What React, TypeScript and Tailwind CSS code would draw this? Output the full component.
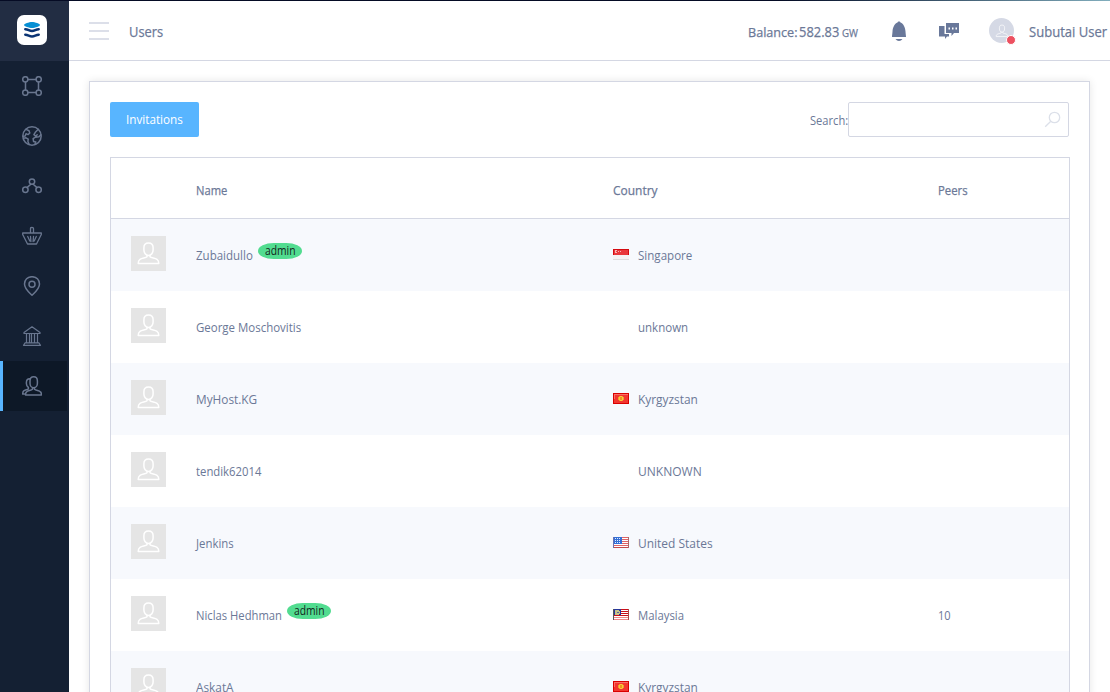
import React from "react";

const S = ({ children }: { children: React.ReactNode }) => (
  <svg width="20" height="20" viewBox="0 0 20 20" fill="none" stroke="currentColor" strokeWidth="1.5" strokeLinejoin="round" strokeLinecap="round">
    {children}
  </svg>
);

/* Slightly narrowed text, anchored at its left edge. */
const T = ({ children, scale = "scale-x-[0.885]" }: { children: React.ReactNode; scale?: string }) => (
  <span className={`inline-block origin-left whitespace-nowrap ${scale}`}>{children}</span>
);

const Person = ({ className = "" }: { className?: string }) => (
  <svg width="25" height="25" viewBox="0 0 25 25" fill="none" stroke="currentColor" strokeWidth="1.5" strokeLinejoin="round" className={className}>
    <path d="M12.500 1.900C9.300 1.900 7.900 3.600 7.900 6.700v2.200c0 2.800 1.800 5.600 4.600 5.600s4.600-2.800 4.600-5.600V6.700c0-3.100-1.400-4.800-4.600-4.800ZM11 14.300v1.500c-1.200 1.300-5 1.200-7 2.600-1.600 1.100-1.800 2-1.800 4h20.600c0-2-.2-2.900-1.800-4-2-1.400-5.800-1.300-7-2.600v-1.500" />
  </svg>
);

const navIcons = [
  <S key="blueprint">
    <circle cx="3.300" cy="3.300" r="2.600" /><circle cx="16.700" cy="3.300" r="2.600" />
    <circle cx="3.300" cy="16.700" r="2.600" /><circle cx="16.700" cy="16.700" r="2.600" />
    <path d="M6 3.500h8M6 16.500h8M3.500 6v8M16.500 6v8" />
  </S>,
  <S key="globe">
    <circle cx="10" cy="10" r="9.200" />
    <path d="M4 3.400 7 4.700l.8 2.200-1.600 1.700-2.200-.9-.8 2.300-2 .3M1.500 12.300l2.500-.5 2.200 1.400-.3 2.300 1.300 3M16.300 3.300l-3 3-1.400 2.400 1.800 1.400 1.500-1.400M18.900 8.800l-2 2-3.400.4-2.400 1.500.5 2.800 2.200.5-1 2.500" />
  </S>,
  <S key="peers">
    <circle cx="10" cy="5.600" r="2.700" /><circle cx="3.400" cy="13.700" r="2.700" /><circle cx="16.600" cy="13.700" r="2.700" />
    <path d="M8.800 8.200 5 11.600M11.200 8.200l3.800 3.400" />
  </S>,
  <S key="basket">
    <path d="M8.500 7V2.500C8.500 1 11.500 1 11.500 2.500V7M.7 7h18.600v1.500L14.500 18h-9L.7 8.500ZM5.700 10.500 7.800 15M8.500 10.500l.4 5M11.500 10.500l-.4 5M14.300 10.500 12.200 15" strokeWidth="1.300" />
  </S>,
  <S key="pin">
    <path d="M10 .7c4.500 0 7.500 3.200 7.500 7.400 0 5-5 8.700-7.500 11.200C7.500 16.800 2.500 13.100 2.500 8.100 2.500 3.900 5.500.7 10 .7Z" /><circle cx="10" cy="8.200" r="3" />
  </S>,
  <S key="bank">
    <path d="M10 .8 18 6.500v1H2v-1ZM4.500 8v8.500M7.500 8v8.500M9.500 8v8.500M12.500 8v8.500M15.500 8v8.500M3.200 16.800h13.600M1.500 19.300h17M3 17l-1.500 2.300M17 17l1.500 2.300" strokeWidth="1.200" />
  </S>,
  <S key="users">
    <path d="M11.700.8C9.200.8 8 2.400 8 5v2.200c0 2.300 1.400 4.600 3.700 4.600s3.700-2.300 3.700-4.600V5c0-2.600-1.200-4.200-3.700-4.200ZM10.500 11.800v1.400c-1.300 1.400-4.700 1.300-6 2.700-.8.800-1 1.600-1 3h16c0-1.400-.2-2.200-1-3-1.300-1.400-4.700-1.300-6-2.700v-1.400M8 2.800C5.500 2.700 4.400 3.900 4.400 6.400v1.200c0 1.800.8 3.200 2 3.900v1.300c-1.200 1-3.700 1-4.800 2.300-.7.800-.9 1.500-.9 3h1.600" />
  </S>,
];

const Flag = ({ kind }: { kind: string }) => (
  <svg width="16" height="11" viewBox="0 0 16 11" shapeRendering="crispEdges" className="mb-[3px] shrink-0">
    {kind === "sg" && <>
      <rect width="16" height="6" fill="#e9383b" /><rect y="6" width="16" height="5" fill="#f5f3f3" />
      <path d="M0 .5h16M.5 0v6M15.500 0v6" stroke="#d40b10" /><path d="M0 10.500h16" stroke="#ddd" />
      <path d="M4 1.500H2.500v2H4M5 2.500h1M7 2.500h1" stroke="#f9b5b5" fill="none" />
    </>}
    {kind === "kg" && <>
      <rect width="16" height="11" fill="#d90000" /><rect x="1" y="1" width="14" height="9" fill="#f2362f" />
      <path d="M1 1.500h14M1.500 2v4" stroke="#fa7065" />
      <path d="M6 3h4v1h1v3h-1v1H6V7H5V4h1z" fill="#f0a02e" /><path d="M7 3h2v1h1v3H9v1H7V7H6V4h1z" fill="#fbc63c" /><rect x="7" y="4" width="2" height="3" fill="#ed9420" />
    </>}
    {kind === "us" && <>
      <rect width="16" height="11" fill="#fff" />
      <path d="M0 .5h16M0 2.500h16M0 4.500h16M0 6.500h16M0 8.500h16" stroke="#df6466" /><path d="M0 10.500h16" stroke="#c44a4c" />
      <rect width="9" height="7" fill="#3470d6" /><path d="M2 1.500h6M2 3.500h6M2 5.500h6" stroke="#e2ecff" strokeDasharray="1 1" />
      <path d="M.5 0v11" stroke="#6970b0" /><path d="M15.500 0v11" stroke="#a66" />
    </>}
    {kind === "my" && <>
      <rect width="16" height="11" fill="#fff" />
      <path d="M0 .5h16M0 2.500h16M0 4.500h16M0 6.500h16" stroke="#c90f18" /><path d="M0 8.500h16M0 10.500h16" stroke="#e88" />
      <rect width="8" height="6" fill="#26379c" /><path d="M2 1h4v1h1v3H6v1H2z" fill="#c5c287" /><path d="M4 3h2v1H4z" fill="#5966a0" /><path d="M.5 0v11" stroke="#555" /><path d="M15.500 0v11" stroke="#a44" />
    </>}
  </svg>
);

const rows = [
  { name: "Zubaidullo", nw: "w-[57px]", ns: "scale-x-[0.885]", admin: true, flag: "sg", country: "Singapore", cs: "scale-x-[0.89]", peers: "" },
  { name: "George Moschovitis", nw: "", ns: "scale-x-[0.882]", admin: false, flag: "", country: "unknown", cs: "scale-x-[0.885]", peers: "" },
  { name: "MyHost.KG", nw: "", ns: "scale-x-[0.91]", admin: false, flag: "kg", country: "Kyrgyzstan", cs: "scale-x-[0.915]", peers: "" },
  { name: "tendik62014", nw: "", ns: "scale-x-[0.87]", admin: false, flag: "", country: "UNKNOWN", cs: "scale-x-[0.925]", peers: "" },
  { name: "Jenkins", nw: "", ns: "scale-x-[0.875]", admin: false, flag: "us", country: "United States", cs: "scale-x-[0.92]", peers: "" },
  { name: "Niclas Hedhman", nw: "w-[86px]", ns: "scale-x-[0.865]", admin: true, flag: "my", country: "Malaysia", cs: "scale-x-[0.875]", peers: "10" },
  { name: "AskatA", nw: "", ns: "scale-x-[0.91]", admin: false, flag: "kg", country: "Kyrgyzstan", cs: "scale-x-[0.915]", peers: "" },
];

export default function App() {
  return (
    <div className="flex h-[692px] w-[1110px] flex-col overflow-hidden bg-white text-[13px] text-[#6b7897] [font-family:'Open_Sans','Noto_Sans',sans-serif]">
      <div className="h-px shrink-0 bg-linear-to-r from-[#050b24] from-70% to-[#82aebd]" />
      <div className="flex min-h-0 flex-1">
        <aside className="flex w-[69px] shrink-0 flex-col bg-[#142033]">
          <div className="flex h-[60px] shrink-0 items-center bg-[#222d43] pb-[2px] pl-[17px]">
            <div className="flex size-[30px] items-center justify-center rounded-[7px] bg-white">
              <svg width="16" height="18" viewBox="0 0 16 18">
                <path d="M0 4c0-1.200 5-3 8-3s8 1.800 8 3-5 3-8 3-8-1.800-8-3Z" fill="#078fd4" />
                <path d="M1.300 8.300c3 .2 4 1.700 6.700 1.700s3.700-1.500 6.700-1.700M1.300 13.700c3 .2 4 1.700 6.700 1.700s3.700-1.500 6.700-1.700" fill="none" stroke="#0b3474" strokeWidth="2.500" strokeLinecap="round" />
              </svg>
            </div>
          </div>
          <nav className="flex flex-col text-[#69768f]">
            {navIcons.map((icon, i) => (
              <a key={i} className={i === 6 ? "flex h-[50px] w-[67px] items-center border-l-[3px] border-[#58b5ff] bg-[#0d1827] pl-[19px]" : "flex h-[50px] items-center pl-[22px]"}>
                {icon}
              </a>
            ))}
          </nav>
        </aside>
        <div className="flex min-w-0 flex-1 flex-col">
          <header className="flex h-[60px] shrink-0 items-center border-b border-[#d4d7e3] pl-5 [-webkit-text-stroke:0.25px]">
            <div className="flex w-5 flex-col gap-[6px]">
              <span className="h-[2px] bg-[#dcdfe9]" /><span className="h-[2px] bg-[#dcdfe9]" /><span className="h-[2px] bg-[#dcdfe9]" />
            </div>
            <h1 className="ml-5 pt-px text-[15px]"><T scale="scale-x-[0.86]">Users</T></h1>
            <div className="ml-auto flex items-center whitespace-nowrap">
              <span className="flex w-[111px] items-baseline pt-px">
                <span className="w-[52px]"><T scale="scale-x-[0.97]">Balance:</T></span>
                <span className="w-[43px] text-[15px]"><T scale="scale-x-[0.86]">582.83</T></span>
                <span className="text-[11px]"><T scale="scale-x-[0.88]">GW</T></span>
              </span>
              <svg width="16" height="20" viewBox="0 0 16 20" className="ml-8" fill="#69789a">
                <path d="M6.500 1.500C6.500 0 9.500 0 9.500 1.500c3 1 4.700 5 5 9 .1 2 .5 4 .5 5.500H1c0-1.500.4-3.500.5-5.500.3-4 2-8 5-9ZM4.500 18h7c-1 1.300-2 2-3.500 2s-2.500-.7-3.500-2Z" />
              </svg>
              <svg width="20" height="16" viewBox="0 0 20 16" className="ml-8" fill="#69789a">
                <path d="M0 3h5.500v8H10v2.500H8L6 16v-2.500H0Z" /><path d="M7 0h13v10h-5l-2.500 3v-3H7Z" />
                <path d="M9.500 4.500H11v2H9.500zM13 4.500h1.500v2H13zM16.500 4.500H18v2h-1.500z" fill="#fff" />
              </svg>
              <div className="relative ml-[30px] flex size-[25px] items-center justify-center rounded-full bg-[#d5d9e5] text-white/80">
                <Person className="size-[14px]" />
                <span className="absolute -right-[2px] -bottom-[2px] size-[10px] rounded-full border border-white bg-[#ed5060]" />
              </div>
              <span className="ml-[15px] w-[81px] pt-px text-[15px]"><T scale="scale-x-[0.87]">Subutai User</T></span>
            </div>
          </header>
          <main className="flex min-h-0 flex-1 flex-col pt-5 pr-5 pl-5">
            <section className="h-[640px] w-[1001px] shrink-0 border border-[#d4d7e3] px-5 pt-5 shadow-[0_0_8px_rgba(0,0,0,0.10)]">
              <div className="flex h-[35px] items-center justify-between">
                <button className="h-[35px] w-[89px] rounded-[2px] bg-[#58b5ff] pl-4 text-left text-white"><T scale="scale-x-[0.9]">Invitations</T></button>
                <label className="flex items-center">
                  <span className="w-[38px] pt-[2px]"><T scale="scale-x-[0.855]">Search:</T></span>
                  <span className="flex h-[35px] w-[221px] items-center justify-end rounded-[2px] border border-[#d4d7e3] pr-[7px] text-[#dce0e9]">
                    <svg width="17" height="17" viewBox="0 0 17 17" fill="none" stroke="currentColor" strokeWidth="1.300"><circle cx="10.500" cy="6.500" r="5.200" /><path d="m6.800 10.200-5.600 5.600" /></svg>
                  </span>
                </label>
              </div>
              <div className="mt-5 w-[960px] border border-[#d4d7e3]">
                <div className="grid h-[61px] grid-cols-[85px_417px_325px_1fr] items-center border-b border-[#d4d7e3] pt-[6px] [-webkit-text-stroke:0.25px]">
                  <span /><span><T scale="scale-x-[0.86]">Name</T></span><span><T scale="scale-x-[0.92]">Country</T></span><span><T scale="scale-x-[0.87]">Peers</T></span>
                </div>
                {rows.map((r) => (
                  <div key={r.name} className="grid h-[72px] grid-cols-[85px_417px_325px_1fr] items-center odd:bg-white even:bg-[#f7f9fd]">
                    <div className="mb-[3px] ml-5 flex size-[35px] items-center justify-center bg-[#e5e5e5] text-white"><Person /></div>
                    <div className="flex items-center pt-px">
                      <span className={r.nw}><T scale={r.ns}>{r.name}</T></span>
                      {r.admin && <span className="mb-[9px] ml-[5px] flex h-4 w-11 items-center rounded-[36%/50%] bg-[#52dc90] pb-px pl-[7px] text-[12px] text-[#14251d]"><T scale="scale-x-[0.86]">admin</T></span>}
                    </div>
                    <div className="flex items-center pt-px">
                      <span className="flex w-[25px]"><Flag kind={r.flag} /></span><T scale={r.cs}>{r.country}</T>
                    </div>
                    <span className="pt-px"><T scale="scale-x-[0.85]">{r.peers}</T></span>
                  </div>
                ))}
              </div>
            </section>
          </main>
        </div>
      </div>
    </div>
  );
}
